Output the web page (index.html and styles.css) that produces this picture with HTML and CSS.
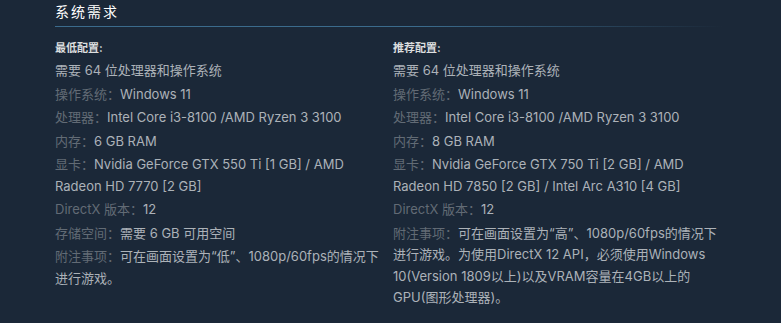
FILE: index.html
```html
<!DOCTYPE html>
<html lang="zh-CN">
<head>
<meta charset="utf-8">
<link rel="stylesheet" href="styles.css">
</head>
<body>
<div class="sysreq">
  <h2 class="sysreq-title">系统需求</h2>
  <div class="sysreq-cols">
    <div class="col">
      <div class="col-title">最低配置:</div>
      <ul class="req-list">
        <li>需要 64 位处理器和操作系统</li>
        <li><span class="lbl">操作系统：</span>Windows 11</li>
        <li><span class="lbl">处理器：</span>Intel Core i3-8100 /AMD Ryzen 3 3100</li>
        <li><span class="lbl">内存：</span>6 GB RAM</li>
        <li><span class="lbl">显卡：</span>Nvidia GeForce GTX 550 Ti [1 GB] / AMD Radeon HD 7770 [2 GB]</li>
        <li><span class="lbl">DirectX 版本：</span>12</li>
        <li><span class="lbl">存储空间：</span>需要 6 GB 可用空间</li>
        <li><span class="lbl">附注事项：</span>可在画面设置为“低”、1080p/60fps的情况下进行游戏。</li>
      </ul>
    </div>
    <div class="col">
      <div class="col-title">推荐配置:</div>
      <ul class="req-list">
        <li>需要 64 位处理器和操作系统</li>
        <li><span class="lbl">操作系统：</span>Windows 11</li>
        <li><span class="lbl">处理器：</span>Intel Core i3-8100 /AMD Ryzen 3 3100</li>
        <li><span class="lbl">内存：</span>8 GB RAM</li>
        <li><span class="lbl">显卡：</span>Nvidia GeForce GTX 750 Ti [2 GB] / AMD Radeon HD 7850 [2 GB] / Intel Arc A310 [4 GB]</li>
        <li><span class="lbl">DirectX 版本：</span>12</li>
        <li><span class="lbl">附注事项：</span>可在画面设置为“高”、1080p/60fps的情况下进行游戏。为使用DirectX 12 API，必须使用Windows 10(Version 1809以上)以及VRAM容量在4GB以上的GPU(图形处理器)。</li>
      </ul>
    </div>
  </div>
</div>
</body>
</html>
```

FILE: styles.css
```css
html, body {
  margin: 0;
  padding: 0;
  background: #1b2838;
}

body {
  font-family: Inter, "Noto Sans CJK SC", sans-serif;
  color: #acb2b8;
}

.sysreq {
  padding-left: 55px;
  width: 668px;
}

.sysreq-title {
  margin: 0;
  padding: 1px 0 4px;
  font-size: 14px;
  line-height: 22px;
  letter-spacing: 2px;
  font-weight: normal;
  color: #ffffff;
  background-image: linear-gradient(to right, #3b6b8c 0%, #3b6b8c 55%, rgba(59, 107, 140, 0) 100%);
  background-repeat: no-repeat;
  background-position: left bottom;
  background-size: 100% 1px;
}

.sysreq-cols {
  display: grid;
  grid-template-columns: 330px 330px;
  column-gap: 8px;
  margin-top: 12px;
}

.col-title {
  font-size: 11px;
  line-height: 18px;
  font-weight: bold;
  color: #dcdedf;
}

.req-list {
  list-style: none;
  margin: 3px 0 0;
  padding: 0;
}

.req-list li {
  font-size: 13px;
  line-height: 21.5px;
  margin-bottom: 2px;
}

.lbl {
  color: #626b75;
}
```
